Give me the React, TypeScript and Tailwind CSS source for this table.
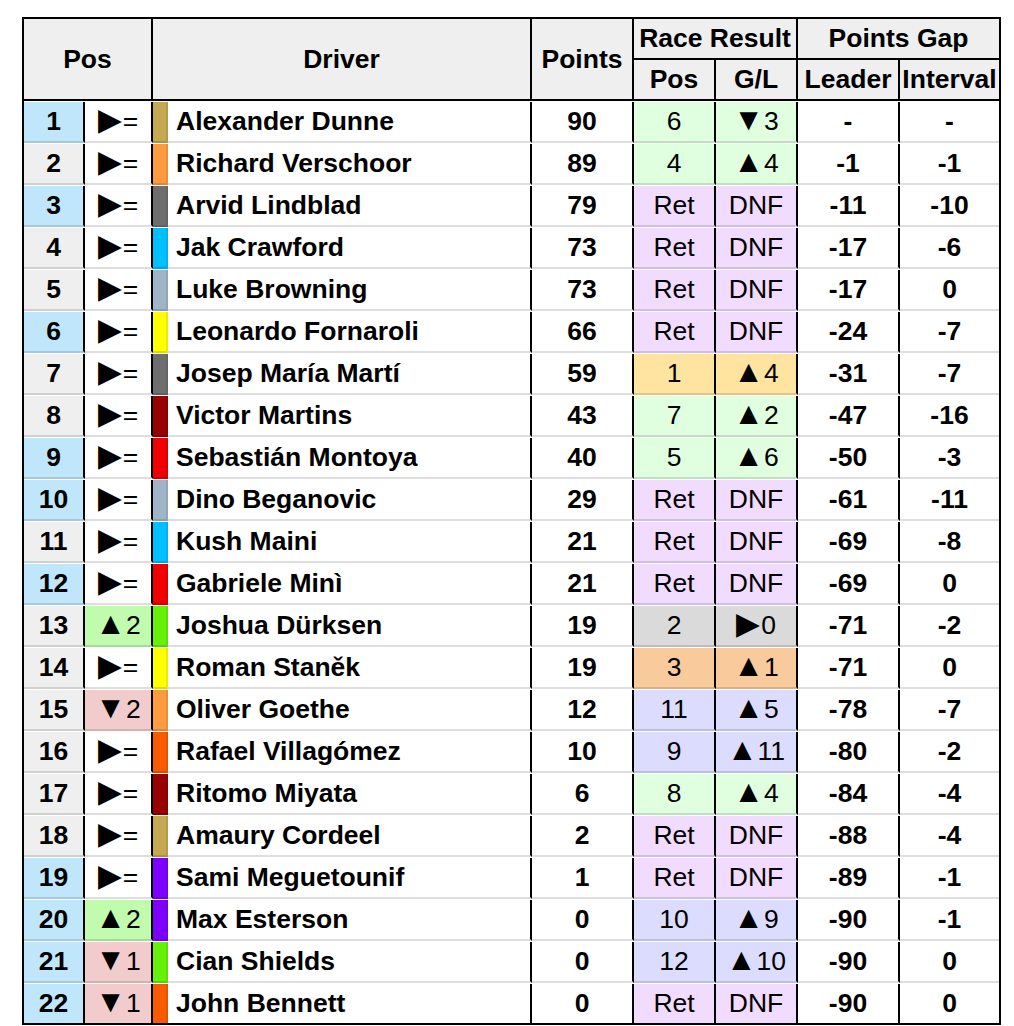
import type { ReactNode } from 'react';

type Move = 'same' | 'up' | 'down';
type Finish = 'green' | 'purple' | 'gold' | 'silver' | 'bronze' | 'blue';

interface Standing {
  pos: number;
  rookie: boolean;
  move: Move;
  moveBy?: number;
  team: string;
  name: string;
  points: number;
  result: string;
  gl: string;
  finish: Finish;
  leader: string;
  interval: string;
}

const finishBg: Record<Finish, string> = {
  green: 'bg-[#dfffdf]',
  purple: 'bg-[#f1dcff]',
  gold: 'bg-[#ffe4a0]',
  silver: 'bg-[#dadada]',
  bronze: 'bg-[#f9cb9c]',
  blue: 'bg-[#dcdcfe]',
};

const moveBg: Record<Move, string> = {
  same: 'bg-white',
  up: 'bg-[#c1fbad]',
  down: 'bg-[#f2cccc]',
};

const standings: Standing[] = [
  { pos: 1, rookie: true, move: 'same', team: 'bg-[#c4a852]', name: 'Alexander Dunne', points: 90, result: '6', gl: '▼3', finish: 'green', leader: '-', interval: '-' },
  { pos: 2, rookie: false, move: 'same', team: 'bg-[#fe9b40]', name: 'Richard Verschoor', points: 89, result: '4', gl: '▲4', finish: 'green', leader: '-1', interval: '-1' },
  { pos: 3, rookie: true, move: 'same', team: 'bg-[#6e6e6e]', name: 'Arvid Lindblad', points: 79, result: 'Ret', gl: 'DNF', finish: 'purple', leader: '-11', interval: '-10' },
  { pos: 4, rookie: false, move: 'same', team: 'bg-[#00c0ff]', name: 'Jak Crawford', points: 73, result: 'Ret', gl: 'DNF', finish: 'purple', leader: '-17', interval: '-6' },
  { pos: 5, rookie: false, move: 'same', team: 'bg-[#a0b4c8]', name: 'Luke Browning', points: 73, result: 'Ret', gl: 'DNF', finish: 'purple', leader: '-17', interval: '0' },
  { pos: 6, rookie: true, move: 'same', team: 'bg-[#ffff00]', name: 'Leonardo Fornaroli', points: 66, result: 'Ret', gl: 'DNF', finish: 'purple', leader: '-24', interval: '-7' },
  { pos: 7, rookie: false, move: 'same', team: 'bg-[#6e6e6e]', name: 'Josep María Martí', points: 59, result: '1', gl: '▲4', finish: 'gold', leader: '-31', interval: '-7' },
  { pos: 8, rookie: false, move: 'same', team: 'bg-[#990000]', name: 'Victor Martins', points: 43, result: '7', gl: '▲2', finish: 'green', leader: '-47', interval: '-16' },
  { pos: 9, rookie: true, move: 'same', team: 'bg-[#f00000]', name: 'Sebastián Montoya', points: 40, result: '5', gl: '▲6', finish: 'green', leader: '-50', interval: '-3' },
  { pos: 10, rookie: true, move: 'same', team: 'bg-[#a0b4c8]', name: 'Dino Beganovic', points: 29, result: 'Ret', gl: 'DNF', finish: 'purple', leader: '-61', interval: '-11' },
  { pos: 11, rookie: false, move: 'same', team: 'bg-[#00c0ff]', name: 'Kush Maini', points: 21, result: 'Ret', gl: 'DNF', finish: 'purple', leader: '-69', interval: '-8' },
  { pos: 12, rookie: true, move: 'same', team: 'bg-[#f00000]', name: 'Gabriele Minì', points: 21, result: 'Ret', gl: 'DNF', finish: 'purple', leader: '-69', interval: '0' },
  { pos: 13, rookie: false, move: 'up', moveBy: 2, team: 'bg-[#66f00a]', name: 'Joshua Dürksen', points: 19, result: '2', gl: '▶0', finish: 'silver', leader: '-71', interval: '-2' },
  { pos: 14, rookie: false, move: 'same', team: 'bg-[#ffff00]', name: 'Roman Staněk', points: 19, result: '3', gl: '▲1', finish: 'bronze', leader: '-71', interval: '0' },
  { pos: 15, rookie: false, move: 'down', moveBy: 2, team: 'bg-[#fe9b40]', name: 'Oliver Goethe', points: 12, result: '11', gl: '▲5', finish: 'blue', leader: '-78', interval: '-7' },
  { pos: 16, rookie: false, move: 'same', team: 'bg-[#fa5a00]', name: 'Rafael Villagómez', points: 10, result: '9', gl: '▲11', finish: 'blue', leader: '-80', interval: '-2' },
  { pos: 17, rookie: false, move: 'same', team: 'bg-[#990000]', name: 'Ritomo Miyata', points: 6, result: '8', gl: '▲4', finish: 'green', leader: '-84', interval: '-4' },
  { pos: 18, rookie: false, move: 'same', team: 'bg-[#c4a852]', name: 'Amaury Cordeel', points: 2, result: 'Ret', gl: 'DNF', finish: 'purple', leader: '-88', interval: '-4' },
  { pos: 19, rookie: true, move: 'same', team: 'bg-[#7f00ff]', name: 'Sami Meguetounif', points: 1, result: 'Ret', gl: 'DNF', finish: 'purple', leader: '-89', interval: '-1' },
  { pos: 20, rookie: true, move: 'up', moveBy: 2, team: 'bg-[#7f00ff]', name: 'Max Esterson', points: 0, result: '10', gl: '▲9', finish: 'blue', leader: '-90', interval: '-1' },
  { pos: 21, rookie: true, move: 'down', moveBy: 1, team: 'bg-[#66f00a]', name: 'Cian Shields', points: 0, result: '12', gl: '▲10', finish: 'blue', leader: '-90', interval: '0' },
  { pos: 22, rookie: true, move: 'down', moveBy: 1, team: 'bg-[#fa5a00]', name: 'John Bennett', points: 0, result: 'Ret', gl: 'DNF', finish: 'purple', leader: '-90', interval: '0' },
];

// splits "▲4" into a larger arrow glyph and its value
function Delta({ text }: { text: string }) {
  const arrow = text[0];
  if (arrow !== '▲' && arrow !== '▼' && arrow !== '▶') return <>{text}</>;
  const size = arrow === '▶' ? 'text-[31px] mr-px' : 'text-[31px]';
  return (
    <span>
      <span className={`${size} leading-[0]`}>{arrow}</span>
      {text.slice(1)}
    </span>
  );
}

function moveLabel(s: Standing): string {
  if (s.move === 'up') return `▲${s.moveBy}`;
  if (s.move === 'down') return `▼${s.moveBy}`;
  return '▶=';
}

function HeadCell({ className, children }: { className: string; children: ReactNode }) {
  return <div className={`flex items-center justify-center font-bold ${className}`}>{children}</div>;
}

function StandingRow({ s }: { s: Standing }) {
  const line = 'border-b-2 border-[rgba(0,0,0,0.13)] group-last:border-b-0';
  return (
    <div className="group flex h-[42px] last:h-[40px] pt-px">
      <div className={`w-[61px] flex items-center justify-center font-bold border-r-2 border-r-black ${line} ${s.rookie ? 'bg-[#bfe6fb]' : 'bg-[#efefef]'}`}>
        {s.pos}
      </div>
      <div className={`w-[68px] flex items-center justify-center border-r-2 border-r-black ${line} ${moveBg[s.move]}`}>
        <Delta text={moveLabel(s)} />
      </div>
      <div className={`w-[15px] ${s.team} border-r-2 border-r-[rgba(0,0,0,0.08)] ${line}`} />
      <div className={`w-[364px] flex items-center pl-2 font-bold border-r-2 border-r-black ${line}`}>{s.name}</div>
      <div className={`w-[102px] flex items-center justify-center font-bold border-r-2 border-r-black ${line}`}>{s.points}</div>
      <div className={`w-[82px] flex items-center justify-center border-r-2 border-r-black ${line} ${finishBg[s.finish]}`}>{s.result}</div>
      <div className={`w-[82px] flex items-center justify-center border-r-2 border-r-black ${line} ${finishBg[s.finish]}`}>
        <Delta text={s.gl} />
      </div>
      <div className={`w-[102px] flex items-center justify-center font-bold border-r-2 border-r-black ${line}`}>{s.leader}</div>
      <div className={`w-[99px] flex items-center justify-center font-bold ${line}`}>{s.interval}</div>
    </div>
  );
}

export default function App() {
  return (
    <div className="min-h-screen bg-white pt-[17px] pl-[22px] font-['Liberation_Sans',Arial,sans-serif] text-[26.5px] text-black leading-none">
      <div className="w-[979px] border-2 border-black">
        {/* Header */}
        <div className="flex h-[82px] bg-[#efefef] border-b-2 border-black">
          <HeadCell className="w-[129px] border-r-2 border-black">Pos</HeadCell>
          <HeadCell className="w-[379px] border-r-2 border-black">Driver</HeadCell>
          <HeadCell className="w-[102px] border-r-2 border-black">Points</HeadCell>
          <div className="w-[164px] flex flex-col border-r-2 border-black">
            <HeadCell className="h-[41px] border-b-2 border-black">Race Result</HeadCell>
            <div className="flex flex-1">
              <HeadCell className="w-[82px] border-r-2 border-black">Pos</HeadCell>
              <HeadCell className="flex-1">G/L</HeadCell>
            </div>
          </div>
          <div className="w-[201px] flex flex-col">
            <HeadCell className="h-[41px] border-b-2 border-black">Points Gap</HeadCell>
            <div className="flex flex-1">
              <HeadCell className="w-[102px] border-r-2 border-black">Leader</HeadCell>
              <HeadCell className="flex-1">Interval</HeadCell>
            </div>
          </div>
        </div>

        {/* Rows */}
        {standings.map((s) => (
          <StandingRow key={s.pos} s={s} />
        ))}
      </div>
    </div>
  );
}
